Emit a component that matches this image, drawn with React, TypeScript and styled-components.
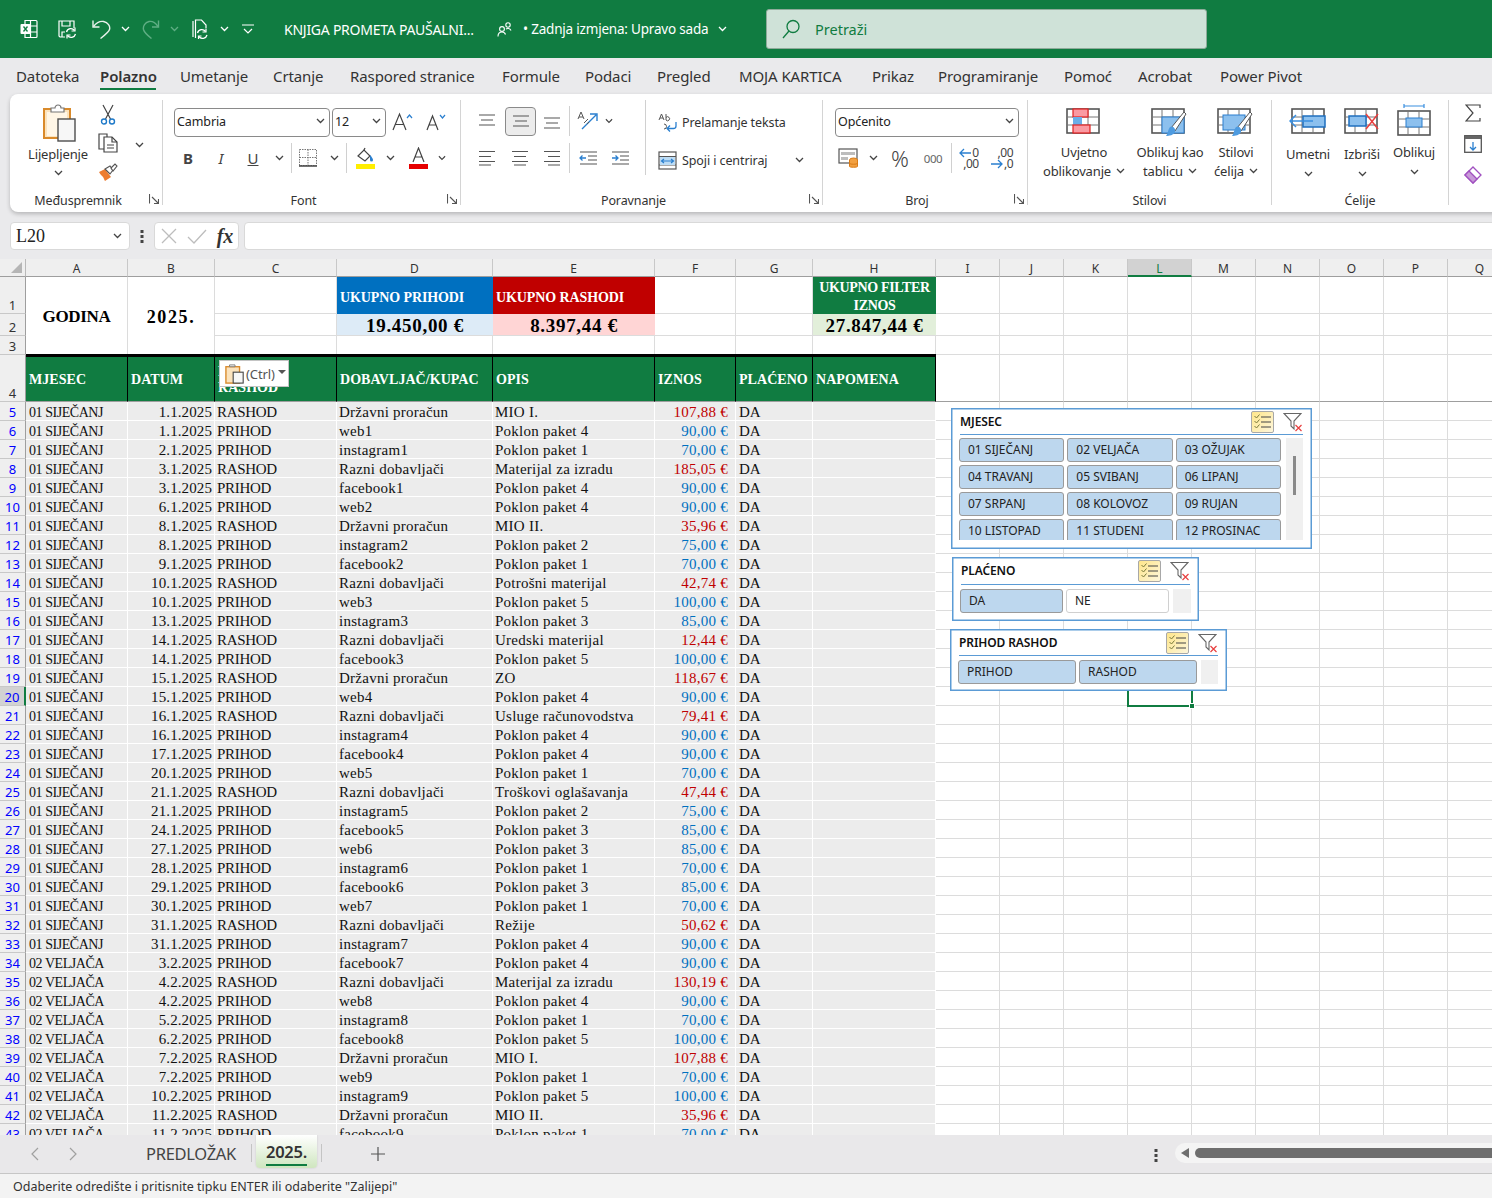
import React from 'react'
import styled, { createGlobalStyle } from 'styled-components'

const UI = '"Noto Sans", "Open Sans", sans-serif'
const SHEET = '"Liberation Serif", serif'
const GREEN = '#107C41'

const GlobalStyle = createGlobalStyle`
  html, body { margin: 0; padding: 0; background: #fff; }
  body { font-family: ${UI}; color: #262626; }
  * { box-sizing: border-box; }
`

const Page = styled.div`
  width: 1492px;
  height: 1198px;
  display: flex;
  flex-direction: column;
  overflow: hidden;
  background: #eaeaec;
`

const Slot = styled.div<{ $w: number; $h?: number; $ml?: number }>`
  width: ${(p) => p.$w}px;
  height: ${(p) => (p.$h ? `${p.$h}px` : 'auto')};
  margin-left: ${(p) => p.$ml ?? 0}px;
  flex-shrink: 0;
  display: flex;
  align-items: center;
  justify-content: center;
`

/* ---------- title bar ---------- */

const TitleBar = styled.div`
  height: 58px;
  background: ${GREEN};
  display: flex;
  align-items: center;
  color: #fff;
  padding-left: 16px;
  flex-shrink: 0;
`

const FileName = styled.div`
  width: 212px;
  margin-left: 24px;
  font-size: 14px;
  letter-spacing: -0.25px;
  white-space: nowrap;
`

const SaveState = styled.div`
  width: 189px;
  margin-left: 10px;
  font-size: 13.5px;
  letter-spacing: -0.2px;
  white-space: nowrap;
`

const SearchBox = styled.div`
  width: 441px;
  height: 40px;
  margin-left: 34px;
  margin-bottom: 1px;
  background: #cfe2d8;
  border: 1px solid #8eab9a;
  border-radius: 3px;
  display: flex;
  align-items: center;
  padding-left: 14px;
  font-size: 14.5px;
  color: ${GREEN};
  gap: 14px;
`

/* ---------- ribbon tabs ---------- */

const TabRow = styled.div`
  height: 36px;
  display: flex;
  padding-left: 16px;
  flex-shrink: 0;
`

const RibbonTab = styled.div<{ $w: number; $active?: boolean }>`
  width: ${(p) => p.$w}px;
  flex-shrink: 0;
  position: relative;
  font-size: 15px;
  letter-spacing: -0.1px;
  line-height: 36px;
  white-space: nowrap;
  color: #333;
  font-weight: ${(p) => (p.$active ? 600 : 400)};
  &::after {
    content: '';
    display: ${(p) => (p.$active ? 'block' : 'none')};
    position: absolute;
    left: 0;
    bottom: 4px;
    width: 56px;
    height: 2px;
    background: ${GREEN};
  }
`

/* ---------- ribbon ---------- */

const Ribbon = styled.div`
  height: 118px;
  margin-left: 10px;
  width: 1500px;
  background: #fff;
  border-radius: 8px;
  box-shadow: 0 2px 4px rgba(0, 0, 0, 0.22);
  display: flex;
  flex-shrink: 0;
  overflow: hidden;
  position: relative;
`

const Group = styled.div<{ $w: number }>`
  width: ${(p) => p.$w}px;
  height: 105px;
  margin-top: 6px;
  flex-shrink: 0;
  display: flex;
  flex-direction: column;
  border-right: 1px solid #d4d4d4;
`

const GroupBody = styled.div`
  flex: 1;
  display: flex;
  min-height: 0;
`

const GroupColumn = styled.div<{ $pl?: number; $pt?: number }>`
  display: flex;
  flex-direction: column;
  padding-left: ${(p) => p.$pl ?? 0}px;
  padding-top: ${(p) => p.$pt ?? 0}px;
`

const GroupFooter = styled.div`
  height: 16px;
  display: flex;
  font-size: 12.5px;
  line-height: 23px;
  letter-spacing: -0.1px;
  color: #333;
`

const GroupName = styled.div`
  flex: 1;
  text-align: center;
`

const RibbonRow = styled.div<{ $mt?: number }>`
  height: 30px;
  margin-top: ${(p) => p.$mt ?? 0}px;
  display: flex;
  align-items: center;
  flex-shrink: 0;
`

const VSep = styled.div<{ $mx?: number; $h?: number }>`
  width: 1px;
  height: ${(p) => p.$h ?? 30}px;
  margin: 0 ${(p) => p.$mx ?? 1}px;
  background: #d0d0d0;
  flex-shrink: 0;
`

const Combo = styled.div<{ $w: number; $ml?: number }>`
  width: ${(p) => p.$w}px;
  height: 29px;
  margin-left: ${(p) => p.$ml ?? 0}px;
  flex-shrink: 0;
  border: 1px solid #8a8a8a;
  border-radius: 4px;
  display: flex;
  align-items: center;
  justify-content: space-between;
  padding: 0 4px 2px 2px;
  font-size: 12.5px;
  letter-spacing: -0.1px;
  color: #222;
`

const PressedSlot = styled.div`
  width: 31px;
  height: 29px;
  margin: 0 0 0 1px;
  background: #ececec;
  border: 1px solid #8a8a8a;
  border-radius: 4px;
  display: flex;
  align-items: center;
  justify-content: center;
  flex-shrink: 0;
`

const RibbonText = styled.div<{ $w: number }>`
  width: ${(p) => p.$w}px;
  margin-left: 2px;
  font-size: 12.5px;
  letter-spacing: -0.1px;
  white-space: nowrap;
  color: #333;
  flex-shrink: 0;
`

const LargeButton = styled.div<{ $w: number; $ml?: number }>`
  width: ${(p) => p.$w}px;
  margin-left: ${(p) => p.$ml ?? 0}px;
  flex-shrink: 0;
  display: flex;
  flex-direction: column;
  align-items: center;
  padding-top: 4px;
  font-size: 13px;
  letter-spacing: -0.15px;
  line-height: 19px;
  color: #333;
  text-align: center;
  white-space: nowrap;
`

const LargeIcon = styled.div<{ $h?: number; $pt?: number; $dx?: number }>`
  height: ${(p) => p.$h ?? 39}px;
  padding-top: ${(p) => p.$pt ?? 4}px;
  margin-left: ${(p) => p.$dx ?? 0}px;
  display: flex;
  align-items: flex-start;
  justify-content: center;
`

const InlineChev = styled.span`
  display: inline-block;
  margin-left: 5px;
  vertical-align: 2px;
  line-height: 0;
  svg { display: block; }
`

/* ---------- formula bar ---------- */

const FormulaBar = styled.div`
  height: 47px;
  flex-shrink: 0;
  display: flex;
  align-items: flex-start;
  padding: 10px 0 0 10px;
  position: relative;
`

const FieldBox = styled.div<{ $w: number; $ml?: number }>`
  width: ${(p) => p.$w}px;
  height: 28px;
  margin-left: ${(p) => p.$ml ?? 0}px;
  background: #fff;
  border: 1px solid #d9d9d9;
  border-radius: 4px;
  display: flex;
  align-items: center;
  flex-shrink: 0;
`

const NameText = styled.div`
  font-family: ${SHEET};
  font-size: 18px;
  color: #222;
  flex: 1;
  padding-left: 5px;
`

const FxText = styled.div`
  font-family: ${SHEET};
  font-style: italic;
  font-weight: 700;
  font-size: 20px;
  color: #333;
`

/* ---------- sheet ---------- */

const SheetArea = styled.div`
  flex: 1;
  min-height: 0;
  overflow: hidden;
  position: relative;
  background: #fff;
`

const SheetGrid = styled.div`
  display: grid;
  grid-template-columns: 26px 102px 87px 122px 156px 162px 81px 77px 123px repeat(9, 64px);
  grid-template-rows: 18px 37px 22px 19px 47px repeat(39, 19px);
  width: 1538px;
  font-family: ${SHEET};
  font-size: 15px;
  color: #111;
`

const Corner = styled.div`
  background: #efefef;
  border-right: 1px solid #b9b9b9;
  border-bottom: 1px solid #9e9e9e;
  display: flex;
  align-items: flex-end;
  justify-content: flex-end;
  padding: 0 3px 3px 0;
`

const CornerMark = styled.div`
  width: 0;
  height: 0;
  border-left: 11px solid transparent;
  border-bottom: 11px solid #b5b5b5;
`

const ColHead = styled.div<{ $active?: boolean }>`
  background: ${(p) => (p.$active ? '#d2d2d2' : '#efefef')};
  border-right: 1px solid #c8c8c8;
  border-bottom: ${(p) => (p.$active ? `2px solid ${GREEN}` : '1px solid #9e9e9e')};
  font-family: ${UI};
  font-size: 12px;
  line-height: 19px;
  text-align: center;
  color: ${(p) => (p.$active ? GREEN : '#333')};
`

const RowHead = styled.div<{ $filtered?: boolean; $active?: boolean }>`
  background: ${(p) => (p.$active ? '#d2d2d2' : '#efefef')};
  border-right: ${(p) => (p.$active ? `2px solid ${GREEN}` : '1px solid #9e9e9e')};
  border-bottom: 1px solid #c8c8c8;
  font-family: ${UI};
  font-size: 13px;
  line-height: 16px;
  display: flex;
  align-items: flex-end;
  justify-content: center;
  color: ${(p) => (p.$filtered ? '#0000ff' : '#333')};
`

const Blank = styled.div<{ $edge?: boolean }>`
  border-right: 1px solid #dcdcdc;
  border-bottom: 1px solid ${(p) => (p.$edge ? '#9e9e9e' : '#dcdcdc')};
`

const MergedTitle = styled.div<{ $size: number; $ls: number }>`
  grid-row: span 3;
  border-right: 1px solid #dcdcdc;
  font-weight: 700;
  font-size: ${(p) => p.$size}px;
  letter-spacing: ${(p) => p.$ls}px;
  padding-top: 2px;
  display: flex;
  align-items: center;
  justify-content: center;
  color: #000;
`

const SummaryHead = styled.div<{ $bg: string; $center?: boolean }>`
  background: ${(p) => p.$bg};
  color: #fff;
  font-weight: 700;
  font-size: 14px;
  line-height: 18px;
  padding: 0 3px;
  display: flex;
  align-items: center;
  justify-content: ${(p) => (p.$center ? 'center' : 'flex-start')};
  text-align: ${(p) => (p.$center ? 'center' : 'left')};
  letter-spacing: ${(p) => (p.$center ? '-0.35px' : '-0.1px')};
  padding-top: ${(p) => (p.$center ? 2 : 4)}px;
`

const SummaryValue = styled.div<{ $bg: string }>`
  background: ${(p) => p.$bg};
  border-bottom: 1px solid #dcdcdc;
  font-weight: 700;
  font-size: 19px;
  color: #000;
  text-align: center;
  line-height: 24px;
  letter-spacing: 0.7px;
`

const TableHead = styled.div`
  background: ${GREEN};
  color: #fff;
  font-weight: 700;
  font-size: 14px;
  line-height: 16px;
  letter-spacing: 0.05px;
  border-top: 2px solid #000;
  box-shadow: 0 -1px 0 #000;
  border-right: 1px solid #000;
  border-bottom: 1px solid #9e9e9e;
  padding: 1px 3px 0 3px;
  display: flex;
  align-items: center;
`

const DataCell = styled.div<{ $align?: string; $color?: string; $pr?: number; $pl?: number; $ls?: number; $size?: number }>`
  background: #ececec;
  border-right: 1px solid #fff;
  border-bottom: 1px solid #fff;
  padding: 0 ${(p) => p.$pr ?? 2}px 0 ${(p) => p.$pl ?? 2}px;
  text-align: ${(p) => p.$align ?? 'left'};
  color: ${(p) => p.$color ?? '#111'};
  font-size: ${(p) => p.$size ?? 15}px;
  letter-spacing: ${(p) => p.$ls ?? 0.25}px;
  line-height: 21px;
  white-space: nowrap;
  overflow: hidden;
`

const CtrlPopup = styled.div`
  position: absolute;
  left: 219px;
  top: 101px;
  width: 70px;
  height: 27px;
  background: #fff;
  border: 1px solid #c4c4c4;
  display: flex;
  align-items: center;
  padding-left: 5px;
  gap: 1px;
  font-family: ${UI};
  font-size: 13px;
  letter-spacing: -0.1px;
  color: #555;
  z-index: 3;
`

const CtrlCaret = styled.div`
  width: 0;
  height: 0;
  border-left: 4px solid transparent;
  border-right: 4px solid transparent;
  border-top: 4px solid #555;
  margin: 0 0 3px 2px;
`

const CellSelection = styled.div`
  position: absolute;
  left: 1127px;
  top: 428px;
  width: 66px;
  height: 20px;
  border: 2px solid ${GREEN};
  z-index: 1;
`

const SelectionHandle = styled.div`
  position: absolute;
  right: -4px;
  bottom: -4px;
  width: 6px;
  height: 6px;
  background: ${GREEN};
  border: 1px solid #fff;
`

/* ---------- slicers ---------- */

const Slicer = styled.div<{ $left: number; $top: number; $w: number; $h: number }>`
  position: absolute;
  left: ${(p) => p.$left}px;
  top: ${(p) => p.$top}px;
  width: ${(p) => p.$w}px;
  height: ${(p) => p.$h}px;
  background: #fff;
  border: 1px solid #5b9bd5;
  box-shadow: inset 0 0 0 0.5px #5b9bd5;
  font-family: ${UI};
  z-index: 2;
  overflow: hidden;
`

const SlicerHead = styled.div<{ $w: number; $h: number }>`
  width: ${(p) => p.$w}px;
  height: ${(p) => p.$h}px;
  margin-left: 8px;
  border-bottom: 1px solid #5b9bd5;
  display: flex;
  align-items: center;
  padding-right: 1px;
`

const SlicerTitle = styled.div`
  flex: 1;
  font-size: 12px;
  font-weight: 600;
  letter-spacing: -0.1px;
  color: #111;
  margin-bottom: 1px;
`

const MultiButton = styled.div`
  width: 23px;
  height: 22px;
  border: 1px solid #a8a8a8;
  border-radius: 2px;
  background: linear-gradient(135deg, #ffe68a, #fdf6dc);
  display: flex;
  align-items: center;
  justify-content: center;
  margin-right: 9px;
`

const SlicerBody = styled.div<{ $mt: number; $h: number }>`
  display: flex;
  margin: ${(p) => p.$mt}px 0 0 7px;
  height: ${(p) => p.$h}px;
  overflow: hidden;
`

const SlicerItems = styled.div<{ $w: number; $cols: number }>`
  width: ${(p) => p.$w}px;
  display: grid;
  grid-template-columns: repeat(${(p) => p.$cols}, 1fr);
  grid-auto-rows: 24px;
  column-gap: 3px;
  row-gap: 3px;
  flex-shrink: 0;
`

const SlicerItem = styled.div<{ $off?: boolean }>`
  background: ${(p) => (p.$off ? '#fff' : '#bdd7ee')};
  border: 1px solid ${(p) => (p.$off ? '#d0d0d0' : '#9a9a9a')};
  border-radius: 3px;
  font-size: 12px;
  line-height: 22px;
  padding-left: 8px;
  color: #222;
  white-space: nowrap;
`

const SlicerTrack = styled.div<{ $ml: number; $w: number }>`
  width: ${(p) => p.$w}px;
  margin-left: ${(p) => p.$ml}px;
  background: #f0f0f0;
  flex-shrink: 0;
  display: flex;
  justify-content: center;
  padding-top: 18px;
`

const SlicerThumb = styled.div`
  width: 3px;
  height: 39px;
  background: #8a8a8a;
`

/* ---------- sheet tabs + status ---------- */

const SheetTabs = styled.div`
  height: 39px;
  flex-shrink: 0;
  background: #e9e8ea;
  border-bottom: 1px solid #c6c6c6;
  display: flex;
  align-items: flex-start;
  padding-left: 16px;
`

const TabNav = styled.div`
  height: 37px;
  display: flex;
  align-items: center;
`

const SheetTabName = styled.div`
  width: 91px;
  margin-left: 54px;
  height: 37px;
  line-height: 38px;
  font-size: 16.5px;
  letter-spacing: -0.3px;
  color: #444;
  white-space: nowrap;
`

const TabSep = styled.div<{ $ml: number }>`
  width: 1px;
  height: 18px;
  margin: 9px 0 0 ${(p) => p.$ml}px;
  background: #c4c4c4;
  flex-shrink: 0;
`

const ActiveSheetTab = styled.div`
  width: 61px;
  height: 33px;
  margin-left: 4px;
  background: linear-gradient(#fff, #cfe6bf);
  border-radius: 0 0 4px 4px;
  display: flex;
  justify-content: center;
  box-shadow: 0 0 2px rgba(0, 0, 0, 0.15);
`

const ActiveSheetLabel = styled.div`
  height: 31px;
  font-size: 16.5px;
  font-weight: 600;
  line-height: 33px;
  letter-spacing: -0.3px;
  color: #333;
  border-bottom: 2px solid ${GREEN};
`

const Dots = styled.div`
  margin-left: auto;
  height: 37px;
  display: flex;
  align-items: center;
  padding-top: 3px;
`

const HScroll = styled.div`
  width: 317px;
  height: 20px;
  margin: 8px 0 0 17px;
  background: #f4f4f4;
  border-radius: 10px 0 0 10px;
  display: flex;
  align-items: center;
  padding-left: 6px;
  flex-shrink: 0;
`

const HArrow = styled.div`
  width: 0;
  height: 0;
  border-top: 5px solid transparent;
  border-bottom: 5px solid transparent;
  border-right: 8px solid #6e6e6e;
`

const HThumb = styled.div`
  flex: 1;
  height: 10px;
  margin-left: 6px;
  background: #6e6e6e;
  border-radius: 5px 0 0 5px;
`

const StatusBar = styled.div`
  height: 24px;
  flex-shrink: 0;
  background: #f3f3f3;
  font-size: 12.5px;
  line-height: 25px;
  padding-left: 13px;
  letter-spacing: 0.02px;
  color: #333;
`

/* ---------- icons ---------- */

const Chevron = ({ color = '#444' }: { color?: string }) => (
  <svg width="9" height="6" viewBox="0 0 9 6">
    <path d="M1 1l3.500 3.500L8 1" fill="none" stroke={color} strokeWidth="1.300" />
  </svg>
)

const ExcelLogo = () => (
  <svg width="18" height="20" viewBox="0 0 18 20">
    <path d="M5 1.500h11a1 1 0 011 1v15a1 1 0 01-1 1H5zM10.500 1.500v17M10.500 7h6.500M10.500 13h6.500" fill="none" stroke="#fff" strokeWidth="1.200" />
    <rect x="0.500" y="5" width="10" height="10" rx="1" fill="#fff" />
    <path d="M3.500 7.500l4 5M7.500 7.500l-4 5" stroke={GREEN} strokeWidth="1.300" />
  </svg>
)

const SaveSync = () => (
  <svg width="20" height="20" viewBox="0 0 20 20" fill="none" stroke="#fff" strokeWidth="1.200">
    <path d="M8 18H3l-1-1V2h15v7M5 2v5h8V2M5 18v-5h3" />
    <path d="M9.500 13a4.500 4.500 0 018-1.500M18.500 15a4.500 4.500 0 01-8 1.500" strokeWidth="1.300" />
    <path d="M18 8.500v3.500h-3.500M10 19.500V16h3.500" strokeWidth="1.200" />
  </svg>
)

const UndoIcon = () => (
  <svg width="20" height="20" viewBox="0 0 20 20" fill="none" stroke="#e8f2ec" strokeWidth="1.400">
    <path d="M1 1.500v6.500h6.500" />
    <path d="M1.500 7.500C5 3 8 2 11.500 2.500 16 3.500 18.500 7 17.500 10.500 17 12.500 13 16 8.500 19.500" />
  </svg>
)

const RedoIcon = () => (
  <svg width="18" height="20" viewBox="0 0 18 20" fill="none" stroke="#5fae84" strokeWidth="1.400">
    <path d="M16.500 1.500V8H10" />
    <path d="M16 7.500C13 3 10 2 7 2.500 3 3.500 0.800 7 1.500 10.500 2 12.500 5 16 9.500 19.500" />
  </svg>
)

const DocSync = () => (
  <svg width="18" height="20" viewBox="0 0 18 20" fill="none" stroke="#fff" strokeWidth="1.200">
    <path d="M1 2v16M3.500 19V1h6l4.500 5v3" />
    <path d="M5.500 14a4.500 4.500 0 018-1.500M15 16a4.500 4.500 0 01-8 1.500" strokeWidth="1.300" />
    <path d="M14 9.500V13h-3.500M6.500 20v-3h3" />
  </svg>
)

const CustomizeQat = () => (
  <svg width="12" height="11" viewBox="0 0 12 11" fill="none" stroke="#fff" strokeWidth="1.200">
    <path d="M0 1h12M2 5l4 4 4-4" />
  </svg>
)

const PeopleIcon = () => (
  <svg width="15" height="15" viewBox="0 0 15 15" fill="none" stroke="#fff" strokeWidth="1.100">
    <circle cx="5" cy="7" r="2.400" />
    <path d="M1 14.500c0-3 1.800-4.500 4-4.500s3 1 3.500 2.500" />
    <circle cx="11" cy="3" r="2.200" />
    <path d="M9 7c1-.8 4-1 5 1.500" />
  </svg>
)

const SearchIcon = () => (
  <svg width="20" height="20" viewBox="0 0 20 20" fill="none" stroke={GREEN} strokeWidth="1.300">
    <circle cx="12" cy="7.500" r="6" />
    <path d="M8 12l-6 7" />
  </svg>
)

const PasteIcon = () => (
  <svg width="36" height="38" viewBox="0 0 36 38">
    <rect x="1" y="5" width="26" height="29" fill="#fbe3bd" stroke="#d98a2b" strokeWidth="2" />
    <rect x="4" y="8" width="20" height="24" fill="#fff6e6" />
    <path d="M8 8V4h4a3 3 0 016 0h3v4z" fill="#fff" stroke="#777" strokeWidth="1.200" />
    <rect x="15" y="15" width="17" height="22" fill="#f7f7f7" stroke="#4d4d4d" strokeWidth="1.400" />
  </svg>
)

const CutIcon = () => (
  <svg width="16" height="21" viewBox="0 0 16 21" fill="none">
    <path d="M3 1l7.500 14M13 1L5.500 15" stroke="#444" strokeWidth="1.200" />
    <circle cx="4" cy="17.500" r="2.500" stroke="#1f7ac9" strokeWidth="1.400" />
    <circle cx="12" cy="17.500" r="2.500" stroke="#1f7ac9" strokeWidth="1.400" />
  </svg>
)

const CopyIcon = () => (
  <svg width="20" height="20" viewBox="0 0 20 20" fill="#fff" stroke="#444" strokeWidth="1.200">
    <path d="M1 1h8v15H1z" />
    <path d="M6 4h8l5 5v10H6z" />
    <path d="M14 4v5h5M9 12h7M9 15h7" fill="none" />
  </svg>
)

const BrushIcon = () => (
  <svg width="20" height="20" viewBox="0 0 20 20">
    <path d="M1 10l6-3 6 8-6 4c-1-1-1-3-2-4-1-1-3-3-4-5z" fill="#ed7d31" />
    <path d="M7 7l5-3 3 4-3 4z" fill="#fff" stroke="#555" strokeWidth="1.100" />
    <path d="M13 6l4-4 2 2-4 5z" fill="#fff" stroke="#555" strokeWidth="1.100" />
  </svg>
)

const GrowFont = ({ up }: { up: boolean }) => (
  <svg width="22" height="20" viewBox="0 0 22 20" fill="none">
    <path d={up ? 'M1 18L7.500 2 14 18M3.500 12.500h8' : 'M2 18L7.500 4 13 18M4 13h7'} stroke="#444" strokeWidth="1.200" />
    <path d={up ? 'M15 6l2.500-3L20 6' : 'M15 3l2.500 3L20 3'} stroke="#2a7fcf" strokeWidth="1.200" />
  </svg>
)

const BoldGlyph = styled.span<{ $kind: string }>`
  font-family: ${UI};
  font-size: 15px;
  color: #444;
  font-weight: ${(p) => (p.$kind === 'b' ? 700 : 400)};
  font-style: ${(p) => (p.$kind === 'i' ? 'italic' : 'normal')};
  text-decoration: ${(p) => (p.$kind === 'u' ? 'underline' : 'none')};
`

const BorderIcon = () => (
  <svg width="18" height="18" viewBox="0 0 18 18" fill="none" stroke="#777" strokeWidth="1" strokeDasharray="1.500 1">
    <path d="M.5.500h17v16H.5zM9 .5v16M.5 8.500h17" />
    <path d="M0 17h18" stroke="#444" strokeWidth="1.400" strokeDasharray="none" />
  </svg>
)

const FillIcon = () => (
  <svg width="19" height="22" viewBox="0 0 19 22">
    <path d="M2 9l6-6 6 6-5 5z" fill="#fff" stroke="#444" strokeWidth="1.200" />
    <path d="M8 3l1-2" stroke="#444" strokeWidth="1.200" />
    <path d="M14 8c2 2 3 4 3 5a1.500 1.500 0 01-3 0z" fill="#2a7fcf" />
    <rect x="0" y="17" width="19" height="5" fill="#ffee00" />
  </svg>
)

const FontColorIcon = () => (
  <svg width="19" height="22" viewBox="0 0 19 22" fill="none">
    <path d="M4 15L9.500 1 15 15M6 10h7" stroke="#444" strokeWidth="1.200" />
    <rect x="0" y="17" width="19" height="5" fill="#e60000" />
  </svg>
)

const Lines = ({ rows, width = 18 }: { rows: Array<[number, number]>; width?: number }) => (
  <svg width={width} height="16" viewBox={`0 0 ${width} 16`} stroke="#555" strokeWidth="1.200">
    {rows.map(([x, y], i) => (
      <path key={i} d={`M${x} ${y}h${width - 2 * x}`} />
    ))}
  </svg>
)

const AlignV = ({ top }: { top: number }) => (
  <Lines rows={[[1, top], [3, top + 5], [1, top + 10]]} />
)

const AlignH = ({ kind }: { kind: string }) => {
  const short = kind === 'c' ? 3 : 0
  return (
    <svg width="18" height="16" viewBox="0 0 18 16" stroke="#555" strokeWidth="1.200">
      <path d="M1 1.500h16M1 11.500h16" />
      <path d={kind === 'r' ? 'M5 6.500h12M5 15h12' : kind === 'l' ? 'M1 6.500h12M1 15h12' : `M${short} 6.500h12M${short} 15h12`} />
    </svg>
  )
}

const OrientIcon = () => (
  <svg width="22" height="22" viewBox="0 0 22 22" fill="none">
    <path d="M5 19L19 5M13 4h7v7" stroke="#2a7fcf" strokeWidth="1.400" />
    <path d="M1 9l3-7 3 7M2 7h4M7 13l4-4M10 14l2-2" stroke="#555" strokeWidth="1" />
  </svg>
)

const IndentIcon = ({ out }: { out: boolean }) => (
  <svg width="18" height="14" viewBox="0 0 18 14" fill="none">
    <path d="M1 1h17M9 5h9M9 9h9M1 13h17" stroke="#555" strokeWidth="1.100" />
    <path d={out ? 'M7 7H1M3.500 4.500L1 7l2.500 2.500' : 'M1 7h6M4.500 4.500L7 7 4.500 9.500'} stroke="#2a7fcf" strokeWidth="1.300" />
  </svg>
)

const WrapIcon = () => (
  <svg width="19" height="21" viewBox="0 0 19 21" fill="none">
    <path d="M1 8l2.500-6L6 8M2 6h3M8 2v6M8 5.500a2 2 0 110 2.500M6 17a2.500 2.500 0 100-5" stroke="#555" strokeWidth="1" />
    <path d="M18 10v4a2.500 2.500 0 01-2.500 2.500H9M12 13.500L9 16.500l3 3" stroke="#2a7fcf" strokeWidth="1.300" />
  </svg>
)

const MergeIcon = () => (
  <svg width="19" height="19" viewBox="0 0 19 19" fill="none">
    <rect x="1" y="1" width="17" height="17" stroke="#555" strokeWidth="1.200" />
    <path d="M1 5.500h17M1 14h17" stroke="#555" strokeWidth="1" />
    <rect x="2" y="6" width="15" height="8" fill="#bcdcf5" />
    <path d="M3.500 10h12M6 8l-2.500 2L6 12M13 8l2.500 2-2.500 2" stroke="#2a7fcf" strokeWidth="1.200" />
  </svg>
)

const AccountingIcon = () => (
  <svg width="22" height="22" viewBox="0 0 22 22" fill="none">
    <rect x="1" y="2" width="18" height="14" fill="#fff" stroke="#555" strokeWidth="1.200" />
    <path d="M3 5h14v3H3zM3 10h7v3H3z" fill="#bdbdbd" />
    <ellipse cx="15.500" cy="13" rx="4" ry="2" fill="#f2a040" stroke="#d87a16" />
    <path d="M11.500 13v6.500c0 1 8 1 8 0V13" fill="#f2a040" stroke="#d87a16" />
    <path d="M11.500 16.500c1 1 7 1 8 0" stroke="#d87a16" />
  </svg>
)

const DecimalGlyph = styled.div`
  font-size: 12px;
  line-height: 11px;
  color: #444;
  letter-spacing: -0.5px;
  display: flex;
  flex-direction: column;
  align-items: flex-end;
`

const Percent = styled.div`
  font-size: 22px;
  font-weight: 300;
  color: #444;
`

const Thousand = styled.div`
  font-size: 11.5px;
  letter-spacing: -0.4px;
  color: #666;
`

const Arrow = ({ flip }: { flip?: boolean }) => (
  <svg width="12" height="10" viewBox="0 0 12 10" fill="none" stroke="#2a7fcf" strokeWidth="1.300">
    <path d={flip ? 'M0 5h11M7 1l4 4-4 4' : 'M12 5H1M5 1L1 5l4 4'} />
  </svg>
)

const DecimalRow = styled.div`
  display: flex;
  align-items: center;
  gap: 1px;
`

const TableBase = () => (
  <g fill="none" stroke="#555" strokeWidth="1.600">
    <rect x="1" y="1" width="32" height="24" />
    <path d="M11 1v24M22 1v24M1 9h32M1 17h32" strokeWidth="1" stroke="#777" />
  </g>
)

const ConditionalIcon = () => (
  <svg width="36" height="28" viewBox="0 0 36 28">
    <TableBase />
    <rect x="7" y="1" width="15" height="8" fill="#fa9aa2" stroke="#e02020" strokeWidth="1.200" />
    <rect x="7" y="9" width="9" height="8" fill="#6aaee8" />
    <rect x="7" y="17" width="17" height="8" fill="#fa9aa2" stroke="#e02020" strokeWidth="1.200" />
  </svg>
)

const BrushOver = () => (
  <g>
    <path d="M20 20L33 4l2 2-11 17z" fill="#fff" stroke="#555" strokeWidth="1" />
    <path d="M19 19c3-1 6 1 5 5-1 3-6 4-9 4 2-2 2-7 4-9z" fill="#4e9be0" />
  </g>
)

const TableStyleIcon = () => (
  <svg width="38" height="30" viewBox="0 0 38 30">
    <TableBase />
    <rect x="11" y="9" width="22" height="16" fill="#8cc0ee" stroke="#2a7fcf" />
    <BrushOver />
  </svg>
)

const CellStyleIcon = () => (
  <svg width="38" height="30" viewBox="0 0 38 30">
    <TableBase />
    <rect x="6" y="7" width="22" height="15" fill="#8cc0ee" stroke="#2a7fcf" />
    <BrushOver />
  </svg>
)

const InsertCellIcon = () => (
  <svg width="38" height="26" viewBox="0 0 38 26">
    <g transform="translate(2 0)"><TableBase /></g>
    <rect x="14" y="8" width="22" height="11" fill="#8cc0ee" stroke="#1f6fbe" strokeWidth="1.500" />
    <path d="M24 13H1M7 7l-6 6 6 6" fill="none" stroke="#3a8fe0" strokeWidth="1.500" />
  </svg>
)

const DeleteCellIcon = () => (
  <svg width="36" height="26" viewBox="0 0 36 26">
    <TableBase />
    <rect x="5" y="8" width="17" height="10" fill="#8cc0ee" stroke="#1f6fbe" strokeWidth="1.500" />
    <path d="M22 6l12 15M34 6L22 21" stroke="#e84040" strokeWidth="1.500" />
  </svg>
)

const FormatCellIcon = () => (
  <svg width="36" height="32" viewBox="0 0 36 32">
    <path d="M8 2h20M8 0v4M28 0v4" stroke="#3a8fe0" strokeWidth="1.200" />
    <g transform="translate(1 6)">
      <TableBase />
      <rect x="9" y="8" width="16" height="9" fill="#8cc0ee" stroke="#2a7fcf" />
    </g>
  </svg>
)

const SigmaIcon = () => (
  <svg width="16" height="18" viewBox="0 0 16 18" fill="none" stroke="#444" strokeWidth="1.200">
    <path d="M15 4V1H1l7 8-7 8h14v-3" />
  </svg>
)

const FillDownIcon = () => (
  <svg width="18" height="18" viewBox="0 0 18 18" fill="none">
    <rect x="0.700" y="0.700" width="16.600" height="16.600" stroke="#555" strokeWidth="1.300" />
    <rect x="1" y="1" width="16" height="3" fill="#666" />
    <path d="M9 7v8M6 12l3 3 3-3" stroke="#2a7fcf" strokeWidth="1.300" />
  </svg>
)

const EraserIcon = () => (
  <svg width="18" height="18" viewBox="0 0 18 18">
    <path d="M1 9l8-8 8 8-8 8z" fill="#fff" stroke="#a050c0" strokeWidth="1.300" />
    <path d="M1 9l4-4 8 8-4 4z" fill="#c89ad8" stroke="#a050c0" strokeWidth="1.300" />
  </svg>
)

const Launcher = () => (
  <Slot $w={16} $h={20}>
    <svg width="10" height="10" viewBox="0 0 10 10" fill="none" stroke="#555" strokeWidth="1.100">
      <path d="M.5 0v9.500M3 3l6 6M9.500 5v4.500H5" />
    </svg>
  </Slot>
)

const ChecklistIcon = () => (
  <svg width="17" height="16" viewBox="0 0 17 16" fill="none" stroke="#444" strokeWidth="1">
    <path d="M7 3h10M7 8h10M7 13h10" />
    <path d="M0.500 2l2 2 3-3.500M0.500 7l2 2 3-3.500M0.500 12l2 2 3-3.500" stroke="#7a7a3a" />
  </svg>
)

const ClearFilterIcon = () => (
  <svg width="19" height="20" viewBox="0 0 19 20" fill="none">
    <path d="M1 1.500h17L11 9v8L8 14V9z" stroke="#666" strokeWidth="1.100" fill="#fff" />
    <path d="M12.500 13l6 6M18.500 13l-6 6" stroke="#e84040" strokeWidth="1.200" />
  </svg>
)

const TinyPaste = () => (
  <svg width="20" height="22" viewBox="0 0 22 22">
    <rect x="1" y="3" width="15" height="18" fill="#fbe3bd" stroke="#d98a2b" strokeWidth="1.500" />
    <path d="M5 3V1h6v2z" fill="#fff" stroke="#777" />
    <rect x="9" y="9" width="11" height="12" fill="#f7f7f7" stroke="#444" strokeWidth="1.200" />
  </svg>
)

const KebabIcon = () => (
  <svg width="4" height="13" viewBox="0 0 4 13" fill="#444">
    <rect x="0.500" width="3" height="3" />
    <rect x="0.500" y="5" width="3" height="3" />
    <rect x="0.500" y="10" width="3" height="3" />
  </svg>
)

/* ---------- data ---------- */

const columns = ['A', 'B', 'C', 'D', 'E', 'F', 'G', 'H', 'I', 'J', 'K', 'L', 'M', 'N', 'O', 'P', 'Q']
const emptyCols = columns.slice(8)

const DP = 'Državni proračun'
const RD = 'Razni dobavljači'
const pk = (n: number) => `Poklon paket ${n}`

// date | type | partner | description | amount
const rows: Array<[string, string, string, string, string]> = [
  ['1.1.2025', 'R', DP, 'MIO I.', '107,88'],
  ['1.1.2025', 'P', 'web1', pk(4), '90,00'],
  ['2.1.2025', 'P', 'instagram1', pk(1), '70,00'],
  ['3.1.2025', 'R', RD, 'Materijal za izradu', '185,05'],
  ['3.1.2025', 'P', 'facebook1', pk(4), '90,00'],
  ['6.1.2025', 'P', 'web2', pk(4), '90,00'],
  ['8.1.2025', 'R', DP, 'MIO II.', '35,96'],
  ['8.1.2025', 'P', 'instagram2', pk(2), '75,00'],
  ['9.1.2025', 'P', 'facebook2', pk(1), '70,00'],
  ['10.1.2025', 'R', RD, 'Potrošni materijal', '42,74'],
  ['10.1.2025', 'P', 'web3', pk(5), '100,00'],
  ['13.1.2025', 'P', 'instagram3', pk(3), '85,00'],
  ['14.1.2025', 'R', RD, 'Uredski materijal', '12,44'],
  ['14.1.2025', 'P', 'facebook3', pk(5), '100,00'],
  ['15.1.2025', 'R', DP, 'ZO', '118,67'],
  ['15.1.2025', 'P', 'web4', pk(4), '90,00'],
  ['16.1.2025', 'R', RD, 'Usluge računovodstva', '79,41'],
  ['16.1.2025', 'P', 'instagram4', pk(4), '90,00'],
  ['17.1.2025', 'P', 'facebook4', pk(4), '90,00'],
  ['20.1.2025', 'P', 'web5', pk(1), '70,00'],
  ['21.1.2025', 'R', RD, 'Troškovi oglašavanja', '47,44'],
  ['21.1.2025', 'P', 'instagram5', pk(2), '75,00'],
  ['24.1.2025', 'P', 'facebook5', pk(3), '85,00'],
  ['27.1.2025', 'P', 'web6', pk(3), '85,00'],
  ['28.1.2025', 'P', 'instagram6', pk(1), '70,00'],
  ['29.1.2025', 'P', 'facebook6', pk(3), '85,00'],
  ['30.1.2025', 'P', 'web7', pk(1), '70,00'],
  ['31.1.2025', 'R', RD, 'Režije', '50,62'],
  ['31.1.2025', 'P', 'instagram7', pk(4), '90,00'],
  ['3.2.2025', 'P', 'facebook7', pk(4), '90,00'],
  ['4.2.2025', 'R', RD, 'Materijal za izradu', '130,19'],
  ['4.2.2025', 'P', 'web8', pk(4), '90,00'],
  ['5.2.2025', 'P', 'instagram8', pk(1), '70,00'],
  ['6.2.2025', 'P', 'facebook8', pk(5), '100,00'],
  ['7.2.2025', 'R', DP, 'MIO I.', '107,88'],
  ['7.2.2025', 'P', 'web9', pk(1), '70,00'],
  ['10.2.2025', 'P', 'instagram9', pk(5), '100,00'],
  ['11.2.2025', 'R', DP, 'MIO II.', '35,96'],
  ['11.2.2025', 'P', 'facebook9', pk(1), '70,00'],
]

const ribbonTabs: Array<[string, number]> = [
  ['Datoteka', 84], ['Polazno', 80], ['Umetanje', 93], ['Crtanje', 77], ['Raspored stranice', 152],
  ['Formule', 83], ['Podaci', 72], ['Pregled', 82], ['MOJA KARTICA', 133], ['Prikaz', 66],
  ['Programiranje', 126], ['Pomoć', 74], ['Acrobat', 82], ['Power Pivot', 100],
]

const months = [
  '01 SIJEČANJ', '02 VELJAČA', '03 OŽUJAK', '04 TRAVANJ', '05 SVIBANJ', '06 LIPANJ',
  '07 SRPANJ', '08 KOLOVOZ', '09 RUJAN', '10 LISTOPAD', '11 STUDENI', '12 PROSINAC',
]

const SlicerHeader = ({ title, w, h }: { title: string; w: number; h: number }) => (
  <SlicerHead $w={w} $h={h}>
    <SlicerTitle>{title}</SlicerTitle>
    <MultiButton><ChecklistIcon /></MultiButton>
    <ClearFilterIcon />
  </SlicerHead>
)

const Sheet = () => (
  <SheetGrid>
    <Corner><CornerMark /></Corner>
    {columns.map((c) => <ColHead key={c} $active={c === 'L'}>{c}</ColHead>)}

    <RowHead>1</RowHead>
    <MergedTitle $size={17} $ls={-0.3}>GODINA</MergedTitle>
    <MergedTitle $size={18} $ls={1.6}>2025.</MergedTitle>
    <Blank />
    <SummaryHead $bg="#0070c0">UKUPNO PRIHODI</SummaryHead>
    <SummaryHead $bg="#c00000">UKUPNO RASHODI</SummaryHead>
    <Blank />
    <Blank />
    <SummaryHead $bg={GREEN} $center>UKUPNO FILTER IZNOS</SummaryHead>
    {emptyCols.map((c) => <Blank key={c} />)}

    <RowHead>2</RowHead>
    <Blank />
    <SummaryValue $bg="#ddebf7">19.450,00 €</SummaryValue>
    <SummaryValue $bg="#ffd5d5">8.397,44 €</SummaryValue>
    <Blank />
    <Blank />
    <SummaryValue $bg="#e2efda">27.847,44 €</SummaryValue>
    {emptyCols.map((c) => <Blank key={c} />)}

    <RowHead>3</RowHead>
    {columns.slice(2).map((c) => <Blank key={c} />)}

    <RowHead>4</RowHead>
    <TableHead>MJESEC</TableHead>
    <TableHead>DATUM</TableHead>
    <TableHead>PRIHOD RASHOD</TableHead>
    <TableHead>DOBAVLJAČ/KUPAC</TableHead>
    <TableHead>OPIS</TableHead>
    <TableHead>IZNOS</TableHead>
    <TableHead>PLAĆENO</TableHead>
    <TableHead>NAPOMENA</TableHead>
    {emptyCols.map((c) => <Blank key={c} $edge />)}

    {rows.map((r, i) => {
      const rowNo = i + 5
      const [date, type, partner, desc, amount] = r
      return (
        <React.Fragment key={rowNo}>
          <RowHead $filtered $active={rowNo === 20}>{rowNo}</RowHead>
          <DataCell $pl={3} $size={14} $ls={-0.45}>{date.endsWith('.2.2025') ? '02 VELJAČA' : '01 SIJEČANJ'}</DataCell>
          <DataCell $align="right" $ls={0.1}>{date}</DataCell>
          <DataCell $ls={-0.3}>{type === 'R' ? 'RASHOD' : 'PRIHOD'}</DataCell>
          <DataCell>{partner}</DataCell>
          <DataCell>{desc}</DataCell>
          <DataCell $align="right" $pr={7} $color={type === 'R' ? '#c00000' : '#0070c0'}>{amount} €</DataCell>
          <DataCell $pl={3} $ls={0}>DA</DataCell>
          <DataCell />
          {emptyCols.map((c) => <Blank key={c} />)}
        </React.Fragment>
      )
    })}
  </SheetGrid>
)

export default function App() {
  return (
    <Page>
      <GlobalStyle />

      <TitleBar>
        <Slot $w={26}><ExcelLogo /></Slot>
        <Slot $w={42} $ml={4}><SaveSync /></Slot>
        <Slot $w={28}><UndoIcon /></Slot>
        <Slot $w={18}><Chevron color="#fff" /></Slot>
        <Slot $w={34}><RedoIcon /></Slot>
        <Slot $w={12}><Chevron color="#5fae84" /></Slot>
        <Slot $w={34} $ml={4}><DocSync /></Slot>
        <Slot $w={12}><Chevron color="#fff" /></Slot>
        <Slot $w={24} $ml={6}><CustomizeQat /></Slot>
        <FileName>KNJIGA PROMETA PAUŠALNI...</FileName>
        <Slot $w={17}><PeopleIcon /></Slot>
        <SaveState>• Zadnja izmjena: Upravo sada</SaveState>
        <Slot $w={20}><Chevron color="#fff" /></Slot>
        <SearchBox>
          <SearchIcon />
          Pretraži
        </SearchBox>
      </TitleBar>

      <TabRow>
        {ribbonTabs.map(([name, w]) => (
          <RibbonTab key={name} $w={w} $active={name === 'Polazno'}>{name}</RibbonTab>
        ))}
      </TabRow>

      <Ribbon>
        <Group $w={153}>
          <GroupBody>
            <GroupColumn $pl={14}>
              <LargeButton $w={68}>
                <LargeIcon $h={41} $pt={0} $dx={6}><PasteIcon /></LargeIcon>
                Lijepljenje
                <Slot $w={12} $h={18}><Chevron /></Slot>
              </LargeButton>
            </GroupColumn>
            <GroupColumn>
              <Slot $w={32} $h={28}><CutIcon /></Slot>
              <Slot $w={32} $h={30}><CopyIcon /></Slot>
              <Slot $w={32} $h={28}><BrushIcon /></Slot>
            </GroupColumn>
            <Slot $w={30}><Chevron /></Slot>
          </GroupBody>
          <GroupFooter><GroupName>Međuspremnik</GroupName><Launcher /></GroupFooter>
        </Group>

        <Group $w={298}>
          <GroupBody>
            <GroupColumn $pl={9}>
              <RibbonRow $mt={7}>
                <Combo $w={156} $ml={2}>Cambria<Chevron /></Combo>
                <Combo $w={54} $ml={2}>12<Chevron /></Combo>
                <Slot $w={34}><GrowFont up /></Slot>
                <Slot $w={32}><GrowFont up={false} /></Slot>
              </RibbonRow>
              <RibbonRow $mt={6}>
                <Slot $w={32}><BoldGlyph $kind="b">B</BoldGlyph></Slot>
                <Slot $w={34}><BoldGlyph $kind="i">I</BoldGlyph></Slot>
                <Slot $w={30}><BoldGlyph $kind="u">U</BoldGlyph></Slot>
                <Slot $w={22}><Chevron /></Slot>
                <VSep />
                <Slot $w={30}><BorderIcon /></Slot>
                <Slot $w={22}><Chevron /></Slot>
                <VSep />
                <Slot $w={34}><FillIcon /></Slot>
                <Slot $w={16}><Chevron /></Slot>
                <Slot $w={40}><FontColorIcon /></Slot>
                <Slot $w={8}><Chevron /></Slot>
              </RibbonRow>
            </GroupColumn>
          </GroupBody>
          <GroupFooter><GroupName>Font</GroupName><Launcher /></GroupFooter>
        </Group>

        <Group $w={362}>
          <GroupBody>
            <GroupColumn $pl={9}>
              <RibbonRow $mt={6}>
                <Slot $w={34}><AlignV top={2} /></Slot>
                <PressedSlot><AlignV top={3} /></PressedSlot>
                <Slot $w={32}><AlignV top={5} /></Slot>
                <VSep />
                <Slot $w={34}><OrientIcon /></Slot>
                <Slot $w={8}><Chevron /></Slot>
              </RibbonRow>
              <RibbonRow $mt={7}>
                <Slot $w={34}><AlignH kind="l" /></Slot>
                <Slot $w={32}><AlignH kind="c" /></Slot>
                <Slot $w={32}><AlignH kind="r" /></Slot>
                <VSep />
                <Slot $w={34}><IndentIcon out /></Slot>
                <Slot $w={30}><IndentIcon out={false} /></Slot>
              </RibbonRow>
            </GroupColumn>
            <GroupColumn $pl={10}>
              <VSep $h={75} $mx={0} />
            </GroupColumn>
            <GroupColumn $pl={8}>
              <RibbonRow $mt={7}>
                <Slot $w={26}><WrapIcon /></Slot>
                <RibbonText $w={108}>Prelamanje teksta</RibbonText>
              </RibbonRow>
              <RibbonRow $mt={8}>
                <Slot $w={26}><MergeIcon /></Slot>
                <RibbonText $w={108}>Spoji i centriraj</RibbonText>
                <Slot $w={18}><Chevron /></Slot>
              </RibbonRow>
            </GroupColumn>
          </GroupBody>
          <GroupFooter><GroupName>Poravnanje</GroupName><Launcher /></GroupFooter>
        </Group>

        <Group $w={205}>
          <GroupBody>
            <GroupColumn $pl={12}>
              <RibbonRow $mt={7}>
                <Combo $w={184}>Općenito<Chevron /></Combo>
              </RibbonRow>
              <RibbonRow $mt={6}>
                <Slot $w={28}><AccountingIcon /></Slot>
                <Slot $w={20}><Chevron /></Slot>
                <Slot $w={34}><Percent>%</Percent></Slot>
                <Slot $w={32}><Thousand>000</Thousand></Slot>
                <VSep $mx={2} />
                <Slot $w={30}>
                  <DecimalGlyph>
                    <DecimalRow><Arrow />0</DecimalRow>
                    <span>,00</span>
                  </DecimalGlyph>
                </Slot>
                <Slot $w={30} $ml={3}>
                  <DecimalGlyph>
                    <span>,00</span>
                    <DecimalRow><Arrow flip />,0</DecimalRow>
                  </DecimalGlyph>
                </Slot>
              </RibbonRow>
            </GroupColumn>
          </GroupBody>
          <GroupFooter><GroupName>Broj</GroupName><Launcher /></GroupFooter>
        </Group>

        <Group $w={244}>
          <GroupBody>
            <LargeButton $w={102} $ml={5}>
              <LargeIcon><ConditionalIcon /></LargeIcon>
              Uvjetno
              <span>oblikovanje<InlineChev><Chevron /></InlineChev></span>
            </LargeButton>
            <LargeButton $w={70}>
              <LargeIcon><TableStyleIcon /></LargeIcon>
              Oblikuj kao
              <span>tablicu<InlineChev><Chevron /></InlineChev></span>
            </LargeButton>
            <LargeButton $w={62}>
              <LargeIcon><CellStyleIcon /></LargeIcon>
              Stilovi
              <span>ćelija<InlineChev><Chevron /></InlineChev></span>
            </LargeButton>
          </GroupBody>
          <GroupFooter><GroupName>Stilovi</GroupName></GroupFooter>
        </Group>

        <Group $w={177}>
          <GroupBody>
            <LargeButton $w={64} $ml={4}>
              <LargeIcon $h={41}><InsertCellIcon /></LargeIcon>
              Umetni
              <Slot $w={12} $h={19}><Chevron /></Slot>
            </LargeButton>
            <LargeButton $w={44}>
              <LargeIcon $h={41}><DeleteCellIcon /></LargeIcon>
              Izbriši
              <Slot $w={12} $h={19}><Chevron /></Slot>
            </LargeButton>
            <LargeButton $w={60}>
              <LargeIcon $h={39} $pt={0}><FormatCellIcon /></LargeIcon>
              Oblikuj
              <Slot $w={12} $h={19}><Chevron /></Slot>
            </LargeButton>
          </GroupBody>
          <GroupFooter><GroupName>Ćelije</GroupName></GroupFooter>
        </Group>

        <GroupColumn $pl={4} $pt={4}>
          <Slot $w={40} $h={30}><SigmaIcon /></Slot>
          <Slot $w={40} $h={32}><FillDownIcon /></Slot>
          <Slot $w={40} $h={30}><EraserIcon /></Slot>
        </GroupColumn>
      </Ribbon>

      <FormulaBar>
        <FieldBox $w={120}>
          <NameText>L20</NameText>
          <Slot $w={24}><Chevron /></Slot>
        </FieldBox>
        <Slot $w={24} $h={28}><KebabIcon /></Slot>
        <FieldBox $w={85}>
          <Slot $w={26} $ml={1}>
            <svg width="16" height="16" viewBox="0 0 16 16" stroke="#bdbdbd" strokeWidth="1.300"><path d="M1 1l14 14M15 1L1 15" /></svg>
          </Slot>
          <Slot $w={29}>
            <svg width="20" height="15" viewBox="0 0 20 15" fill="none" stroke="#bdbdbd" strokeWidth="1.300"><path d="M1 8l6 6L19 1" /></svg>
          </Slot>
          <Slot $w={28}><FxText>fx</FxText></Slot>
        </FieldBox>
        <FieldBox $w={1300} $ml={5} />
      </FormulaBar>

      <SheetArea>
        <Sheet />
        <CtrlPopup>
          <TinyPaste />
          (Ctrl)
          <CtrlCaret />
        </CtrlPopup>
        <CellSelection><SelectionHandle /></CellSelection>

        <Slicer $left={951} $top={149} $w={361} $h={141}>
          <SlicerHeader title="MJESEC" w={343} h={26} />
          <SlicerBody $mt={3} $h={102}>
            <SlicerItems $w={322} $cols={3}>
              {months.map((m) => <SlicerItem key={m}>{m}</SlicerItem>)}
            </SlicerItems>
            <SlicerTrack $ml={5} $w={17}><SlicerThumb /></SlicerTrack>
          </SlicerBody>
        </Slicer>

        <Slicer $left={952} $top={298} $w={247} $h={64}>
          <SlicerHeader title="PLAĆENO" w={229} h={27} />
          <SlicerBody $mt={4} $h={24}>
            <SlicerItems $w={209} $cols={2}>
              <SlicerItem>DA</SlicerItem>
              <SlicerItem $off>NE</SlicerItem>
            </SlicerItems>
            <SlicerTrack $ml={4} $w={18} />
          </SlicerBody>
        </Slicer>

        <Slicer $left={950} $top={370} $w={277} $h={62}>
          <SlicerHeader title="PRIHOD RASHOD" w={259} h={26} />
          <SlicerBody $mt={4} $h={24}>
            <SlicerItems $w={239} $cols={2}>
              <SlicerItem>PRIHOD</SlicerItem>
              <SlicerItem>RASHOD</SlicerItem>
            </SlicerItems>
            <SlicerTrack $ml={4} $w={17} />
          </SlicerBody>
        </Slicer>
      </SheetArea>

      <SheetTabs>
        <TabNav>
          <Slot $w={38}>
            <svg width="8" height="14" viewBox="0 0 8 14" fill="none" stroke="#a0a0a0" strokeWidth="1.200"><path d="M7 1L1 7l6 6" /></svg>
          </Slot>
          <Slot $w={38}>
            <svg width="8" height="14" viewBox="0 0 8 14" fill="none" stroke="#a0a0a0" strokeWidth="1.200"><path d="M1 1l6 6-6 6" /></svg>
          </Slot>
        </TabNav>
        <SheetTabName>PREDLOŽAK</SheetTabName>
        <TabSep $ml={14} />
        <ActiveSheetTab><ActiveSheetLabel>2025.</ActiveSheetLabel></ActiveSheetTab>
        <TabSep $ml={4} />
        <TabNav>
          <Slot $w={20} $ml={46}>
            <svg width="14" height="14" viewBox="0 0 14 14" stroke="#555" strokeWidth="1.200"><path d="M7 0v14M0 7h14" /></svg>
          </Slot>
        </TabNav>
        <Dots><KebabIcon /></Dots>
        <HScroll>
          <HArrow />
          <HThumb />
        </HScroll>
      </SheetTabs>

      <StatusBar>Odaberite odredište i pritisnite tipku ENTER ili odaberite "Zalijepi"</StatusBar>
    </Page>
  )
}
